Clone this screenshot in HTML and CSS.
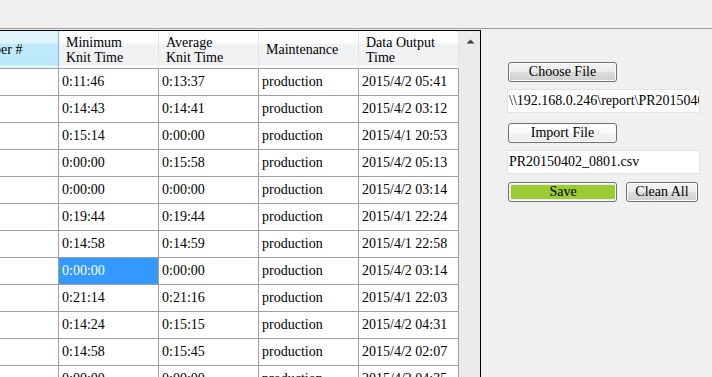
FILE: index.html
```html
<!DOCTYPE html>
<html>
<head>
<meta charset="utf-8">
<link rel="stylesheet" href="styles.css">
</head>
<body>
<div class="topbar"></div>
<div class="main">
  <div class="grid">
    <div class="viewport">
      <div class="table">
        <div class="row head">
          <div class="hc sel">Number #</div>
          <div class="hc">Minimum<br>Knit Time</div>
          <div class="hc">Average<br>Knit Time</div>
          <div class="hc">Maintenance</div>
          <div class="hc">Data Output<br>Time</div>
        </div>
        <div class="row"><div class="c"></div><div class="c">0:11:46</div><div class="c">0:13:37</div><div class="c">production</div><div class="c">2015/4/2 05:41</div></div>
        <div class="row"><div class="c"></div><div class="c">0:14:43</div><div class="c">0:14:41</div><div class="c">production</div><div class="c">2015/4/2 03:12</div></div>
        <div class="row"><div class="c"></div><div class="c">0:15:14</div><div class="c">0:00:00</div><div class="c">production</div><div class="c">2015/4/1 20:53</div></div>
        <div class="row"><div class="c"></div><div class="c">0:00:00</div><div class="c">0:15:58</div><div class="c">production</div><div class="c">2015/4/2 05:13</div></div>
        <div class="row"><div class="c"></div><div class="c">0:00:00</div><div class="c">0:00:00</div><div class="c">production</div><div class="c">2015/4/2 03:14</div></div>
        <div class="row"><div class="c"></div><div class="c">0:19:44</div><div class="c">0:19:44</div><div class="c">production</div><div class="c">2015/4/1 22:24</div></div>
        <div class="row"><div class="c"></div><div class="c">0:14:58</div><div class="c">0:14:59</div><div class="c">production</div><div class="c">2015/4/1 22:58</div></div>
        <div class="row"><div class="c"></div><div class="c active">0:00:00</div><div class="c">0:00:00</div><div class="c">production</div><div class="c">2015/4/2 03:14</div></div>
        <div class="row"><div class="c"></div><div class="c">0:21:14</div><div class="c">0:21:16</div><div class="c">production</div><div class="c">2015/4/1 22:03</div></div>
        <div class="row"><div class="c"></div><div class="c">0:14:24</div><div class="c">0:15:15</div><div class="c">production</div><div class="c">2015/4/2 04:31</div></div>
        <div class="row"><div class="c"></div><div class="c">0:14:58</div><div class="c">0:15:45</div><div class="c">production</div><div class="c">2015/4/2 02:07</div></div>
        <div class="row"><div class="c"></div><div class="c">0:00:00</div><div class="c">0:00:00</div><div class="c">production</div><div class="c">2015/4/2 04:35</div></div>
      </div>
    </div>
    <div class="scrollbar">
      <svg class="up" width="9" height="5" viewBox="0 0 9 5"><path d="M0.5 4.5 L4.5 0.5 L8.5 4.5 Z" fill="#3c3c3c"/></svg>
    </div>
  </div>
  <div class="panel">
    <button class="btn">Choose File</button>
    <div class="field">\\192.168.0.246\report\PR20150402_0801.csv</div>
    <button class="btn light gap-btn">Import File</button>
    <div class="field">PR20150402_0801.csv</div>
    <div class="actions">
      <button class="btn save"><span class="fill">Save</span></button>
      <button class="btn clean">Clean All</button>
    </div>
  </div>
</div>
</body>
</html>
```

FILE: styles.css
```css
html, body {
  margin: 0;
  height: 100%;
  overflow: hidden;
  background: #f0f0f0;
  font-family: "Liberation Serif", serif;
  font-size: 14px;
  color: #000;
}
* { box-sizing: border-box; }

.topbar {
  height: 29px;
  border-bottom: 1px solid #a0a0a0;
}

.main {
  display: flex;
  height: 348px;
}

.grid {
  width: 481px;
  margin-top: 1px;
  border-top: 1px solid #000;
  border-right: 1px solid #000;
  display: flex;
  background: #fff;
  overflow: hidden;
}

.viewport {
  width: 459px;
  overflow: hidden;
  flex: none;
}

.table {
  margin-left: -41px;
  width: 500px;
}

.row {
  display: grid;
  grid-template-columns: repeat(5, 100px);
}

.hc {
  height: 38px;
  border-bottom: 1px solid #a0a0a0;
  border-right: 1px solid #e2e3e5;
  background: linear-gradient(#ffffff 0, #fdfdfd 32%, #f2f3f5 36%, #eff0f2 92%, #ffffff 94%);
  padding-left: 7px;
  display: flex;
  align-items: center;
  line-height: 15px;
}

.hc.sel {
  background: linear-gradient(#e4f6fd 0, #e0f5fd 32%, #c0eafb 36%, #bce8fa 92%, #e4f6fd 94%);
  border-right: 1px solid #6fc1e9;
}

.c {
  height: 27px;
  border-bottom: 1px solid #a0a0a0;
  border-right: 1px solid #a0a0a0;
  padding-left: 3px;
  display: flex;
  align-items: center;
  white-space: nowrap;
}

.c.active {
  background: #3399ff;
  color: #fff;
}

.scrollbar {
  flex: 1;
  background: #ebebeb;
  display: flex;
  justify-content: center;
  padding-top: 8px;
  padding-left: 1px;
}

.up { display: block; }

.panel {
  flex: 1;
  padding-top: 33px;
  padding-left: 27px;
  display: flex;
  flex-direction: column;
  align-items: flex-start;
}

.btn {
  display: block;
  width: 109px;
  height: 20px;
  margin: 0;
  padding: 0;
  border: 1px solid #707070;
  border-radius: 3px;
  background: linear-gradient(#f3f3f3 0, #ebebeb 48%, #dddddd 52%, #cfcfcf 100%);
  box-shadow: inset 0 0 0 1px #fbfbfb;
  font-family: "Liberation Serif", serif;
  font-size: 14px;
  line-height: 18px;
  color: #000;
  text-align: center;
}

.btn.light {
  background: linear-gradient(#ffffff 0, #fafafa 48%, #f2f2f2 52%, #ececec 100%);
}

.gap-btn { margin-top: 10px; }

.field {
  margin-top: 7px;
  margin-left: -1px;
  width: 193px;
  height: 24px;
  background: #fff;
  border: 1px solid #e3e3e3;
  padding-left: 1px;
  line-height: 22px;
  white-space: nowrap;
  overflow: hidden;
}

.actions {
  margin-top: 8px;
  display: flex;
  gap: 9px;
}

.btn.save {
  padding: 2px 1px 2px 2px;
  background: #e9e9e9;
}

.fill {
  display: block;
  height: 14px;
  background: #9acd32;
  line-height: 14px;
}

.btn.clean { width: 72px; }
```
